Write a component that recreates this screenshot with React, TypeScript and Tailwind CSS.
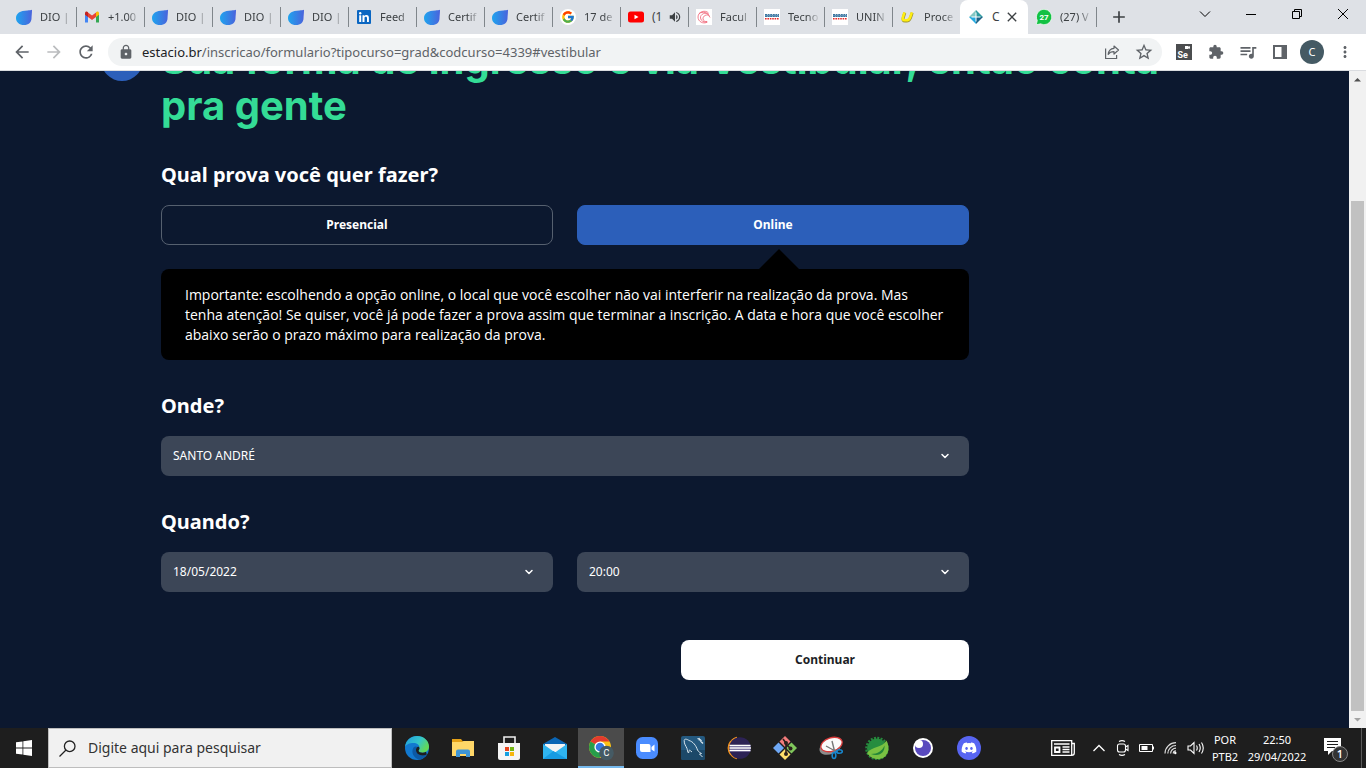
import React from "react";
import { FcGoogle } from "react-icons/fc";
import { FaDiscord } from "react-icons/fa";
import {
  MdArrowBack,
  MdArrowForward,
  MdRefresh,
  MdLock,
  MdExtension,
  MdStarOutline,
  MdQueueMusic,
  MdMoreVert,
  MdClose,
  MdAdd,
  MdVolumeUp,
} from "react-icons/md";
import { ChevronDown } from "lucide-react";

type IconProps = { className?: string };

/* ---------- Tab favicons ---------- */

const Dio = () => (
  <svg viewBox="0 0 16 16" className="size-4">
    <defs>
      <linearGradient id="dio" x1="0" y1="0" x2="1" y2="0">
        <stop offset="0" stopColor="#1fa4ee" />
        <stop offset="1" stopColor="#4a63dc" />
      </linearGradient>
    </defs>
    <path d="M16 .8C15.200 1.100 13.400 1.400 11.500 1.500 4 1.500 0 4.500 0 9c0 4.300 3.300 7 8 7 4.500 0 7.500-2.700 7.500-6.500C15.600 6.500 16 5 16 .8z" fill="url(#dio)" />
  </svg>
);

const Gmail = () => (
  <svg viewBox="0 0 16 16" className="size-4">
    <path d="M1 4v9.500h3V7z" fill="#4285f4" />
    <path d="M15 4v9.500h-3V7z" fill="#34a853" />
    <path d="M4 8V3.500L8 6.500l4-3V8l-4 3z" fill="#ea4335" />
    <path d="M1 4.500C1 2.500 2.800 2 4 3.200V8L1 5.800z" fill="#c5221f" />
    <path d="M15 4.500c0-2-1.800-2.500-3-1.300V8l3-2.200z" fill="#fbbc04" />
  </svg>
);

const Linkedin = () => (
  <svg viewBox="0 0 16 16" className="size-4">
    <rect x="1" y="1" width="14" height="14" rx="1" fill="#0a66c2" />
    <path d="M3.200 6.200h2V13h-2zM6.500 6.200h1.900v1c.9-1.600 4.500-1.700 4.500 1.600V13H11V9.300c0-2-2.500-1.900-2.500 0V13h-2z" fill="#fff" />
    <circle cx="4.200" cy="4.200" r="1.200" fill="#fff" />
  </svg>
);

const GoogleTab = () => (
  <span className="flex size-4 shrink-0 items-center justify-center rounded-full bg-white">
    <FcGoogle className="size-3.5" />
  </span>
);

const Youtube = () => (
  <svg viewBox="0 0 16 16" className="size-4 shrink-0">
    <rect y="2.500" width="16" height="11" rx="2.500" fill="#f00" />
    <path d="M6.500 5.700v4.600L10.500 8z" fill="#fff" />
  </svg>
);

const Facul = () => (
  <svg viewBox="0 0 16 16" className="size-4">
    <path fill="#fff" d="M0 0h16v16H0z" />
    <g fill="none" stroke="#ef5f74" strokeWidth=".8">
      <path d="M12.500 4C9.500.5 2 2.500 2 8c0 4.500 5 7.500 9.500 5" />
      <path d="M13 5.500C10 2.500 4 5 4.500 9c.3 3 3.500 4.500 6.500 4" />
      <path d="M13.500 7C11 4.500 6.500 7 7 10c.3 1.800 2 2.800 4 2.500M3 4.500c4-2 8-2 11 4" />
    </g>
  </svg>
);

const Uninove = () => (
  <svg viewBox="0 0 16 16" className="size-4">
    <path fill="#fff" d="M0 0h16v16H0z" />
    <path d="M1 6h14v1.500H1z" fill="#5d8fb3" />
    <path d="M1 5.500h14M1 7.500h14" stroke="#39749f" strokeWidth="1" strokeDasharray="2 .6" />
    <path d="M1 9.700h14" stroke="#e52b2b" strokeWidth="1.600" strokeDasharray="1.600 .8" />
  </svg>
);

const YellowU = () => (
  <svg viewBox="0 0 16 16" className="size-4" fill="none">
    <path d="M4.800 3.800 3.300 8.500c-.8 2.500 0 3.500 1.700 3.500h1.500c2 0 3.200-1 4-3.200l1.700-5" stroke="#9b9330" strokeWidth="3" />
    <path d="M4.500 3.300 3 8c-.8 2.500 0 3.300 1.700 3.300h1.500c2 0 3.200-.9 4-3.100l1.700-4.900" stroke="#ffee12" strokeWidth="2.500" />
  </svg>
);

const Estacio = () => (
  <svg viewBox="0 0 16 16" className="size-4 shrink-0">
    <path d="M8 1v7H1z" fill="#83c8c3" />
    <path d="M8 1v7h7z" fill="#2f9aa0" />
    <path d="M1 8h7v7z" fill="#25a9df" />
    <path d="M15 8H8v7z" fill="#1d6286" />
    <path d="M8 3.500v9M3.500 8h9" stroke="#fff" strokeWidth="1" />
  </svg>
);

const Whats = () => (
  <svg viewBox="0 0 16 16" className="size-4">
    <path d="M8 .3a7.700 7.700 0 1 1-3.500 14.500L.3 15.800l1-4.300A7.700 7.700 0 0 1 8 .3z" fill="#13c143" stroke="#fff" strokeWidth=".7" />
    <text x="8" y="11" textAnchor="middle" fontSize="8" fontWeight="700" fill="#fff" fontFamily="Roboto, sans-serif">27</text>
  </svg>
);

/* ---------- Toolbar icons ---------- */

const Share = ({ className }: IconProps) => (
  <svg viewBox="0 0 16 16" className={className} fill="none" stroke="currentColor" strokeWidth="1.200">
    <path d="M1.600 4.500v10h11V11" />
    <path d="M10 2l4.500 4L10 10V7.700c-3 0-4.600.8-5.800 2.700C4.500 7 6.500 4.600 10 4.300z" strokeLinejoin="round" />
  </svg>
);

const Selenium = () => (
  <svg viewBox="0 0 16 16" className="size-4">
    <path d="M0 0h16v16H0z" fill="#4b4d4f" />
    <path d="M9 2h3.500v1L14 2v3l-1.500-1v1H9z" fill="#fff" />
    <text x="1.500" y="13.500" fontSize="9" fontWeight="700" fill="#fff" fontFamily="Roboto, sans-serif">Se</text>
  </svg>
);

const SidePanel = () => (
  <svg viewBox="0 0 16 16" className="size-4">
    <path d="M2 2h12v12H2z" fill="none" stroke="#5f6368" strokeWidth="2" />
    <path d="M9.500 2H14v12H9.500z" fill="#5f6368" />
  </svg>
);

/* ---------- Taskbar icons ---------- */

const Edge = () => (
  <svg viewBox="0 0 24 24" className="size-6">
    <defs>
      <linearGradient id="edgeTop" x1="0" y1="0" x2="1" y2=".5">
        <stop offset="0" stopColor="#1f9be0" />
        <stop offset=".6" stopColor="#35c6c9" />
        <stop offset="1" stopColor="#62d957" />
      </linearGradient>
    </defs>
    <circle cx="12" cy="12" r="12" fill="#1279cf" />
    <path d="M0 11C.6 4.500 5.800 0 12 0c7 0 12 5 12 10.500 0 4-3 6.200-6.500 6.200-2.500 0-4-1-4-2 0-.8 1-1.200 1-3C14.500 9 12 7 8.500 7 4.500 7 1 8.500 0 11z" fill="url(#edgeTop)" />
    <path d="M8.500 11.500c-3 5 .5 10.800 6 12.200 3-.6 5.500-2.400 7.300-5.200-5 2.300-10.800.2-10.800-4.500 0-1.400.6-2.300 1.500-3-1.300-1-3-.6-4 .5z" fill="#0c59a4" />
    <path d="M13.600 14.700c0 1.200 1.900 2 3.900 2 1.300 0 2.500-.3 3.500-.9l.8 2.700c-5 2.300-10.800.2-10.800-4.500 0-1.400.6-2.300 1.500-3 .9-.6 2 .3 2 1.200 0 1.200-.9 1.700-.9 2.500z" fill="#1e1e1e" />
  </svg>
);

const Folder = () => (
  <svg viewBox="0 0 24 24" className="size-6">
    <path d="M1 3h9l2 2.500h11V20H1z" fill="#e5a117" />
    <path d="M2 6h9l1.500-1H23v15H1V6z" fill="#ffd768" />
    <path d="M5 21v-5.500Q5 13.500 7 13.500h10q2 0 2 2V21h-4v-3H9v3z" fill="#3e95d5" />
  </svg>
);

const Store = () => (
  <svg viewBox="0 0 24 24" className="size-6">
    <path d="M7 8V1h11v7" fill="none" stroke="#eee" strokeWidth="1.600" />
    <path d="M1 7h22v15q0 2-2 2H3q-2 0-2-2z" fill="#f5f5f5" />
    <path d="M8 11h4v4H8z" fill="#e8441e" />
    <path d="M13 11h4v4h-4z" fill="#73b512" />
    <path d="M8 16h4v4H8z" fill="#169fe0" />
    <path d="M13 16h4v4h-4z" fill="#f7b60c" />
  </svg>
);

const Mail = () => (
  <svg viewBox="0 0 24 24" className="size-6">
    <path d="M12 1l12 7v15H0V8z" fill="#0b66b5" />
    <path d="M2 8h20v8H2z" fill="#f4f4f4" />
    <path d="M0 8l12 8.500L24 8v15H0z" fill="#2fb4ef" />
    <path d="M0 23l10.500-8 1.500 1 12 7z" fill="#179be2" />
  </svg>
);

const Chrome = () => (
  <svg viewBox="0 0 26 26" className="size-6.5">
    <circle cx="12" cy="12" r="11" fill="#fbc116" />
    <path d="M12 12L2.500 6.500A11 11 0 0 1 21.500 6.500H12z" fill="#e33b2e" />
    <path d="M2.500 6.500A11 11 0 0 0 11.500 23l5-8.500L12 12z" fill="#269e4a" />
    <circle cx="12" cy="12" r="5.600" fill="#fff" />
    <circle cx="12" cy="12" r="4.300" fill="#3577df" />
    <circle cx="18.500" cy="18" r="7.300" fill="#455a64" />
    <text x="18.500" y="21.200" textAnchor="middle" fontSize="9" fill="#fff" fontFamily="Roboto, sans-serif">C</text>
  </svg>
);

const Zoom = () => (
  <svg viewBox="0 0 24 24" className="size-6">
    <rect x="1" y="1" width="22" height="22" rx="6.500" fill="#4a8cff" />
    <path d="M5 8h8.500q2 0 2 2v6H7q-2 0-2-2zM16.500 11L19.500 8.500v7L16.500 13.500z" fill="#fff" />
  </svg>
);

const Mysql = () => (
  <svg viewBox="0 0 24 24" className="size-6">
    <rect width="24" height="24" rx="2" fill="#24597f" />
    <path d="M0 14h24v8q0 2-2 2H2q-2 0-2-2z" fill="#1c4868" />
    <path d="M7.500 17c-1-1-1-3-1.500-4.500C5 10 3 8 3.200 4.500 3.300 2.500 6 3 8 4.500c4 1 7 5 8.500 9.500 1 2 2.500 2.500 4 3.500l-2 .5 3 3M7.500 17c.5-1 .5-2.500 1-3 1 .5 1.500 1.500 2.500 2" fill="none" stroke="#d6e4ec" strokeWidth="1" />
    <path d="M16.500 2.500l2.500 1 1.500 1.500M18 2l.5 2.500M19.500 5l2.500 2.500" fill="none" stroke="#dce8ef" strokeWidth="1.300" />
  </svg>
);

const Eclipse = () => (
  <svg viewBox="0 0 24 24" className="size-6">
    <path d="M10 1.200A11 11 0 0 0 10 22.800 13 13 0 0 1 10 1.200z" fill="#f7941e" stroke="#f7941e" />
    <circle cx="13" cy="12" r="10.800" fill="#2c2255" />
    <path d="M3 9h20.500v6.500H3z" fill="#544b86" />
    <path d="M2.500 9.500h21M2.500 12h21.500M2.500 14.500h21" stroke="#fff" strokeWidth="1.300" />
  </svg>
);

const Git = () => (
  <svg viewBox="0 0 24 24" className="size-6">
    <path d="M12 0l5.500 5.500L12 11 6.500 5.500z" fill="#f37c7c" />
    <path d="M18.500 6.500L24 12l-5.500 5.500L13 12z" fill="#80c75c" />
    <path d="M5.500 6.500L11 12l-5.500 5.500L0 12z" fill="#6fa8f5" />
    <path d="M12 13l5.500 5.500L12 24l-5.500-5.500z" fill="#ffe06b" />
    <path d="M10 3l3 4v11M13 8l4.500 4.500" fill="none" stroke="#2b211c" strokeWidth="1.600" />
    <circle cx="13" cy="7" r="2" fill="#2b211c" />
    <circle cx="17.500" cy="12.500" r="2" fill="#2b211c" />
    <circle cx="13" cy="18" r="2" fill="#2b211c" />
  </svg>
);

const Snip = () => (
  <svg viewBox="0 0 24 24" className="size-6">
    <ellipse cx="11.500" cy="11" rx="11.500" ry="7" transform="rotate(-22 11.500 11)" fill="#8d8d8d" />
    <ellipse cx="12.500" cy="8.500" rx="11" ry="6.700" transform="rotate(-18 12.500 8.500)" fill="#fafafa" stroke="#d93b3b" strokeWidth="1.300" />
    <path d="M13 5l2.500 10M7 10l11 6" stroke="#777" strokeWidth="1.400" />
    <g fill="none" stroke="#1887cf" strokeWidth="1.600">
      <ellipse cx="15" cy="19.500" rx="1.800" ry="3" />
      <ellipse cx="20.500" cy="15.500" rx="2.800" ry="1.800" />
      <path d="M15.500 16.500l3-1.500" />
    </g>
  </svg>
);

const Spring = () => (
  <svg viewBox="0 0 24 24" className="size-6">
    <circle cx="12" cy="12.500" r="10.700" fill="none" stroke="#258a3c" strokeWidth="2.200" strokeDasharray="2 1.360" />
    <circle cx="12" cy="12.500" r="10" fill="#268d3f" />
    <path d="M2 17C7 10 17 12 21.500 4.500c3.500 7 2.300 14-3.500 17.500-5 2.500-12 1-16-5z" fill="#79c142" />
    <path d="M6 18c7 0 11-3 13.500-8.500C20 16 15 21 6 18z" fill="#238638" />
  </svg>
);

const Insomnia = () => (
  <svg viewBox="0 0 24 24" className="size-6">
    <circle cx="12" cy="12" r="10" fill="#fff" />
    <circle cx="12" cy="12" r="8" fill="#5849be" />
    <circle cx="8" cy="8" r="4" fill="#fff" />
  </svg>
);

const Discord = () => (
  <span className="flex size-6 items-center justify-center rounded-full bg-[#5865f2]">
    <FaDiscord className="size-4 text-white" />
  </span>
);

/* ---------- Browser ---------- */

type Tab = { title: string; icon: React.ReactNode; active?: boolean; audio?: boolean };

const tabs: Tab[] = [
  { title: "DIO |", icon: <Dio /> },
  { title: "+1.00", icon: <Gmail /> },
  { title: "DIO |", icon: <Dio /> },
  { title: "DIO |", icon: <Dio /> },
  { title: "DIO |", icon: <Dio /> },
  { title: "Feed", icon: <Linkedin /> },
  { title: "Certif", icon: <Dio /> },
  { title: "Certif", icon: <Dio /> },
  { title: "17 de", icon: <GoogleTab /> },
  { title: "(1", icon: <Youtube />, audio: true },
  { title: "Facul", icon: <Facul /> },
  { title: "Tecno", icon: <Uninove /> },
  { title: "UNIN", icon: <Uninove /> },
  { title: "Proce", icon: <YellowU /> },
  { title: "C", icon: <Estacio />, active: true },
  { title: "(27) V", icon: <Whats /> },
];

const fade = "[mask-image:linear-gradient(to_right,black_60%,transparent)]";

function TabItem({ tab, divider }: { tab: Tab; divider: boolean }) {
  return (
    <div className={`flex w-17 shrink-0 items-center ${tab.active ? "rounded-t-lg bg-white" : ""}`}>
      <span className={`mr-[7px] h-5 w-px shrink-0 ${divider ? "bg-[#80868b]" : ""}`} />
      <span className="mr-2 size-4 shrink-0">{tab.icon}</span>
      {tab.audio || tab.active ? (
        <>
          <span className="w-4 whitespace-nowrap text-xs">{tab.title}</span>
          {tab.audio ? (
            <MdVolumeUp className="size-3.5 shrink-0" />
          ) : (
            <button aria-label="Fechar guia" className="-ml-1">
              <MdClose className="size-4" />
            </button>
          )}
        </>
      ) : (
        <span className={`w-8 whitespace-nowrap text-[11px] ${fade}`}>{tab.title}</span>
      )}
    </div>
  );
}

function Browser() {
  return (
    <header className="shrink-0 text-[#3c4043]">
      <div className="flex h-8.5 bg-[#dee1e6] pl-2">
        {tabs.map((tab, i) => (
          <TabItem key={i} tab={tab} divider={i > 0 && !tab.active && !tabs[i - 1].active} />
        ))}
        <span className="h-5 w-px self-center bg-[#80868b]" />
        <button aria-label="Nova guia" className="ml-2 px-1">
          <MdAdd className="size-5" />
        </button>
        <div className="ml-auto flex items-center text-black">
          <button aria-label="Pesquisar guias" className="flex w-11.5 justify-center pb-1.5">
            <svg viewBox="0 0 12 12" className="size-3" fill="none" stroke="currentColor"><path d="M1 3.500l5 5 5-5" /></svg>
          </button>
          <button aria-label="Minimizar" className="flex w-11.5 justify-center pb-1.5">
            <svg viewBox="0 0 12 12" className="size-3" fill="none" stroke="currentColor"><path d="M1 6.500h10" /></svg>
          </button>
          <button aria-label="Restaurar" className="flex w-11.5 justify-center pb-1.5">
            <svg viewBox="0 0 12 12" className="size-3" fill="none" stroke="currentColor"><path d="M1.500 3.500h7v7h-7zM3.500 3.500v-2h7v7h-2" /></svg>
          </button>
          <button aria-label="Fechar" className="flex w-11.5 justify-center pb-1.5">
            <svg viewBox="0 0 12 12" className="size-3" fill="none" stroke="currentColor"><path d="M1 1l10 10M11 1L1 11" /></svg>
          </button>
        </div>
      </div>
      <div className="flex h-9 items-center bg-white text-[#5f6368]">
        <button aria-label="Voltar" className="flex w-11 justify-center"><MdArrowBack className="size-5" /></button>
        <button aria-label="Avançar" className="flex w-5 justify-center text-[#babcbe]"><MdArrowForward className="size-5" /></button>
        <button aria-label="Recarregar" className="flex w-11 justify-center"><MdRefresh className="size-5" /></button>
        <div className="flex h-7 flex-1 items-center rounded-full bg-[#f1f3f4] pl-2.5 pr-2">
          <MdLock className="size-4" />
          <p className="flex-1 pl-2 text-[13px] leading-5">
            <span className="text-[#202124]">estacio.br</span>/inscricao/formulario?tipocurso=grad&amp;codcurso=4339#vestibular
          </p>
          <button aria-label="Compartilhar" className="mr-3.5"><Share className="size-4" /></button>
          <button aria-label="Favoritar"><MdStarOutline className="size-5" /></button>
        </div>
        <div className="flex items-center gap-4 pl-3.5 pr-3">
          <button aria-label="Selenium IDE"><Selenium /></button>
          <button aria-label="Extensões"><MdExtension className="size-4" /></button>
          <button aria-label="Mídia"><MdQueueMusic className="-mx-0.5 size-5" /></button>
          <button aria-label="Painel lateral"><SidePanel /></button>
          <button aria-label="Perfil" className="-mx-1 flex size-6 items-center justify-center rounded-full bg-[#455a64] text-[11px] text-white">C</button>
          <button aria-label="Menu"><MdMoreVert className="size-4.5" /></button>
        </div>
      </div>
      <div className="h-px bg-[#dadce0]" />
    </header>
  );
}

/* ---------- Page ---------- */

function SelectField({ id, label, value }: { id: string; label: string; value: string }) {
  return (
    <div className="relative flex-1">
      <select
        id={id}
        aria-label={label}
        defaultValue={value}
        className="h-10 w-full appearance-none rounded-lg bg-[#3c4657] px-3 text-xs text-white"
      >
        <option>{value}</option>
      </select>
      <ChevronDown className="pointer-events-none absolute right-4.5 top-3.5 size-3 text-white" strokeWidth={3} />
    </div>
  );
}

function Page() {
  return (
    <main className="flex min-w-0 flex-1 items-start overflow-hidden bg-[#0c182f] pl-[101px] text-white">
      <span className="-mt-8 size-10.5 shrink-0 rounded-full bg-[#2c5fba]" />
      <div className="-mt-8.5 min-w-0 flex-1 pl-4.5 pr-20">
        <h1 className="max-w-[1040px] font-[Inter,sans-serif] text-[40px] font-bold leading-[46px] text-[#34dc96]">
          Sua forma de ingresso é via Vestibular, então conta pra gente
        </h1>
        <form className="max-w-[808px]">
          <h2 className="mb-4 mt-8 text-xl font-bold leading-7">Qual prova você quer fazer?</h2>
          <div className="flex gap-6">
            <button type="button" className="h-10 flex-1 rounded-lg border border-[#56606f] text-xs font-bold">Presencial</button>
            <button type="button" className="h-10 flex-1 rounded-lg border border-[#2c5fba] bg-[#2c5fba] text-xs font-bold">Online</button>
          </div>
          <div className="relative mt-6 rounded-lg bg-black pb-[15px] pl-6 pr-5 pt-4 font-['Open_Sans',sans-serif] text-sm leading-5">
            <svg viewBox="0 0 40 20" className="absolute -top-5 right-[170px] h-5 w-10">
              <path d="M0 20L20 0l20 20z" fill="#000" />
            </svg>
            <p>
              Importante: escolhendo a opção online, o local que você escolher não vai interferir na realização da prova. Mas
              tenha atenção! Se quiser, você já pode fazer a prova assim que terminar a inscrição. A data e hora que você
              escolher abaixo serão o prazo máximo para realização da prova.
            </p>
          </div>
          <h2 className="mb-4 mt-8 text-xl font-bold leading-7"><label htmlFor="onde">Onde?</label></h2>
          <div className="flex"><SelectField id="onde" label="Onde?" value="SANTO ANDRÉ" /></div>
          <h2 className="mb-4 mt-8 text-xl font-bold leading-7"><label htmlFor="data">Quando?</label></h2>
          <div className="flex gap-6">
            <SelectField id="data" label="Data" value="18/05/2022" />
            <SelectField id="hora" label="Horário" value="20:00" />
          </div>
          <div className="mt-12 flex justify-end">
            <button type="button" className="h-10 w-72 rounded-lg bg-white text-xs font-bold text-[#1c1f26]">Continuar</button>
          </div>
        </form>
      </div>
    </main>
  );
}

function Scrollbar() {
  return (
    <div className="flex w-[17px] shrink-0 flex-col items-center bg-[#f1f1f1]">
      <svg viewBox="0 0 17 17" className="size-[17px] shrink-0"><path d="M5 10.500L8.500 7l3.500 3.500z" fill="#505050" /></svg>
      <div className="h-[113px] shrink-0" />
      <div className="w-[13px] flex-1 bg-[#c1c1c1]" />
      <svg viewBox="0 0 17 17" className="size-[17px] shrink-0"><path d="M5 7l3.500 3.500L12 7z" fill="#a3a3a3" /></svg>
    </div>
  );
}

/* ---------- Taskbar ---------- */

const apps = [
  { name: "Edge", icon: <Edge /> },
  { name: "Explorador de Arquivos", icon: <Folder /> },
  { name: "Microsoft Store", icon: <Store /> },
  { name: "Email", icon: <Mail /> },
  { name: "Chrome", icon: <Chrome />, active: true },
  { name: "Zoom", icon: <Zoom /> },
  { name: "MySQL Workbench", icon: <Mysql /> },
  { name: "Eclipse", icon: <Eclipse /> },
  { name: "Git", icon: <Git /> },
  { name: "Ferramenta de Captura", icon: <Snip /> },
  { name: "Spring Tools", icon: <Spring /> },
  { name: "Insomnia", icon: <Insomnia /> },
  { name: "Discord", icon: <Discord /> },
];

function Taskbar() {
  return (
    <footer className="flex h-10 shrink-0 bg-[#1e1e1e] text-white">
      <button aria-label="Iniciar" className="flex w-12 items-center justify-center">
        <svg viewBox="0 0 16 16" className="size-4" fill="#fff">
          <path d="M0 2.300l6.500-.9v6.200H0zM7.300 1.300L16 0v7.600H7.300zM0 8.400h6.500v6.200L0 13.700zM7.300 8.400H16V16l-8.700-1.300z" />
        </svg>
      </button>
      <label className="flex w-[344px] items-center gap-3 border border-[#bdbdbd] bg-[#f1f1f1] pl-2.5 text-[#222]">
        <svg viewBox="0 0 17 17" className="size-[17px] shrink-0" fill="none" stroke="#222" strokeWidth="1.300">
          <circle cx="10.700" cy="6.300" r="5.300" />
          <path d="M7 10L.5 16.500" />
        </svg>
        <input
          aria-label="Pesquisar"
          placeholder="Digite aqui para pesquisar"
          className="min-w-0 flex-1 bg-transparent text-sm outline-none placeholder:text-[#333]"
        />
      </label>
      <nav className="flex pl-0.5">
        {apps.map((app) => (
          <button
            key={app.name}
            aria-label={app.name}
            className={`flex w-11.5 items-center justify-center ${app.active ? "border-b-2 border-[#76b9ed] bg-[#4b4b4b] pt-0.5" : ""}`}
          >
            {app.icon}
          </button>
        ))}
      </nav>
      <div className="ml-auto flex items-center">
        <svg viewBox="0 0 24 16" className="mr-4 h-4 w-6" fill="none" stroke="#fff" strokeWidth="1.300">
          <path d="M.7.7h20v14.600h-20zM20.700 3.500h2.600v9.500q0 2.300-2.600 2.300" />
          <path d="M3 4h15.500M11.500 7h7M11.500 9.500h7M11.500 12h7" />
          <path d="M4 7.500h4.500V12H4z" strokeWidth="1.800" />
        </svg>
        <svg viewBox="0 0 16 16" className="mr-2 size-4" fill="none" stroke="#fff" strokeWidth="1.300"><path d="M2.500 11L8 5.500 13.500 11" /></svg>
        <svg viewBox="0 0 16 16" className="mr-2 size-4" fill="none" stroke="#fff" strokeWidth="1.100">
          <rect x="2.500" y="4" width="8" height="8" rx="2" />
          <path d="M10.500 7L13 5.500v5L10.500 9M4 1.500Q7-.2 10 1.500M4 14.500q3 1.700 6 0" />
        </svg>
        <svg viewBox="0 0 16 16" className="mr-2 size-4" fill="none" stroke="#fff">
          <path d="M.5 4.500h13v7H.5zM14.500 6.500v3" />
          <path d="M2.500 6h6v4h-6z" fill="#fff" stroke="none" />
        </svg>
        <svg viewBox="0 0 16 16" className="mr-2 size-4" fill="none" stroke="#ddd" strokeWidth="1.200">
          <path d="M2 13.500C2 7.500 7 2.700 13 2.700M4.800 13.500c0-4.500 3.700-8 8.200-8M7.600 13.500c0-3 2.400-5.300 5.400-5.300M10.300 13.500c0-1.500 1.200-2.600 2.700-2.600" />
          <circle cx="12.300" cy="13" r="1.200" fill="#fff" stroke="none" />
        </svg>
        <svg viewBox="0 0 18 16" className="h-4 w-4.5" fill="none" stroke="#fff" strokeWidth="1.100">
          <path d="M1 6h2.500L7 2.500v11L3.500 10H1zM9.500 5.500q1.500 2.500 0 5M12 4q2.500 4 0 8M14.500 2.500q3.500 5.500 0 11" />
        </svg>
        <div className="w-10 text-center text-[11px] leading-[17px]"><p>POR</p><p>PTB2</p></div>
        <div className="w-16 text-center text-[11px] leading-[17px]"><p>22:50</p><p>29/04/2022</p></div>
        <svg viewBox="0 0 26 26" className="ml-3.5 mt-1 size-6.5">
          <path d="M1 1h17v13H9l-4 4v-4H1z" fill="#fff" />
          <path d="M4 4.500h11M4 7.500h11M4 10.500h8" stroke="#1e1e1e" strokeWidth="1.100" />
          <circle cx="17" cy="17" r="7.500" fill="#333" stroke="#888" />
          <text x="17" y="21" textAnchor="middle" fontSize="11" fontWeight="600" fill="#fff" fontFamily="Open Sans, sans-serif">1</text>
        </svg>
        <span className="ml-3 mr-1 h-10 w-px bg-[#5a5a5a]" />
      </div>
    </footer>
  );
}

export default function App() {
  return (
    <div className="flex h-screen flex-col overflow-hidden font-['Noto_Sans','Open_Sans',sans-serif]">
      <Browser />
      <div className="flex min-h-0 flex-1">
        <Page />
        <Scrollbar />
      </div>
      <Taskbar />
    </div>
  );
}
